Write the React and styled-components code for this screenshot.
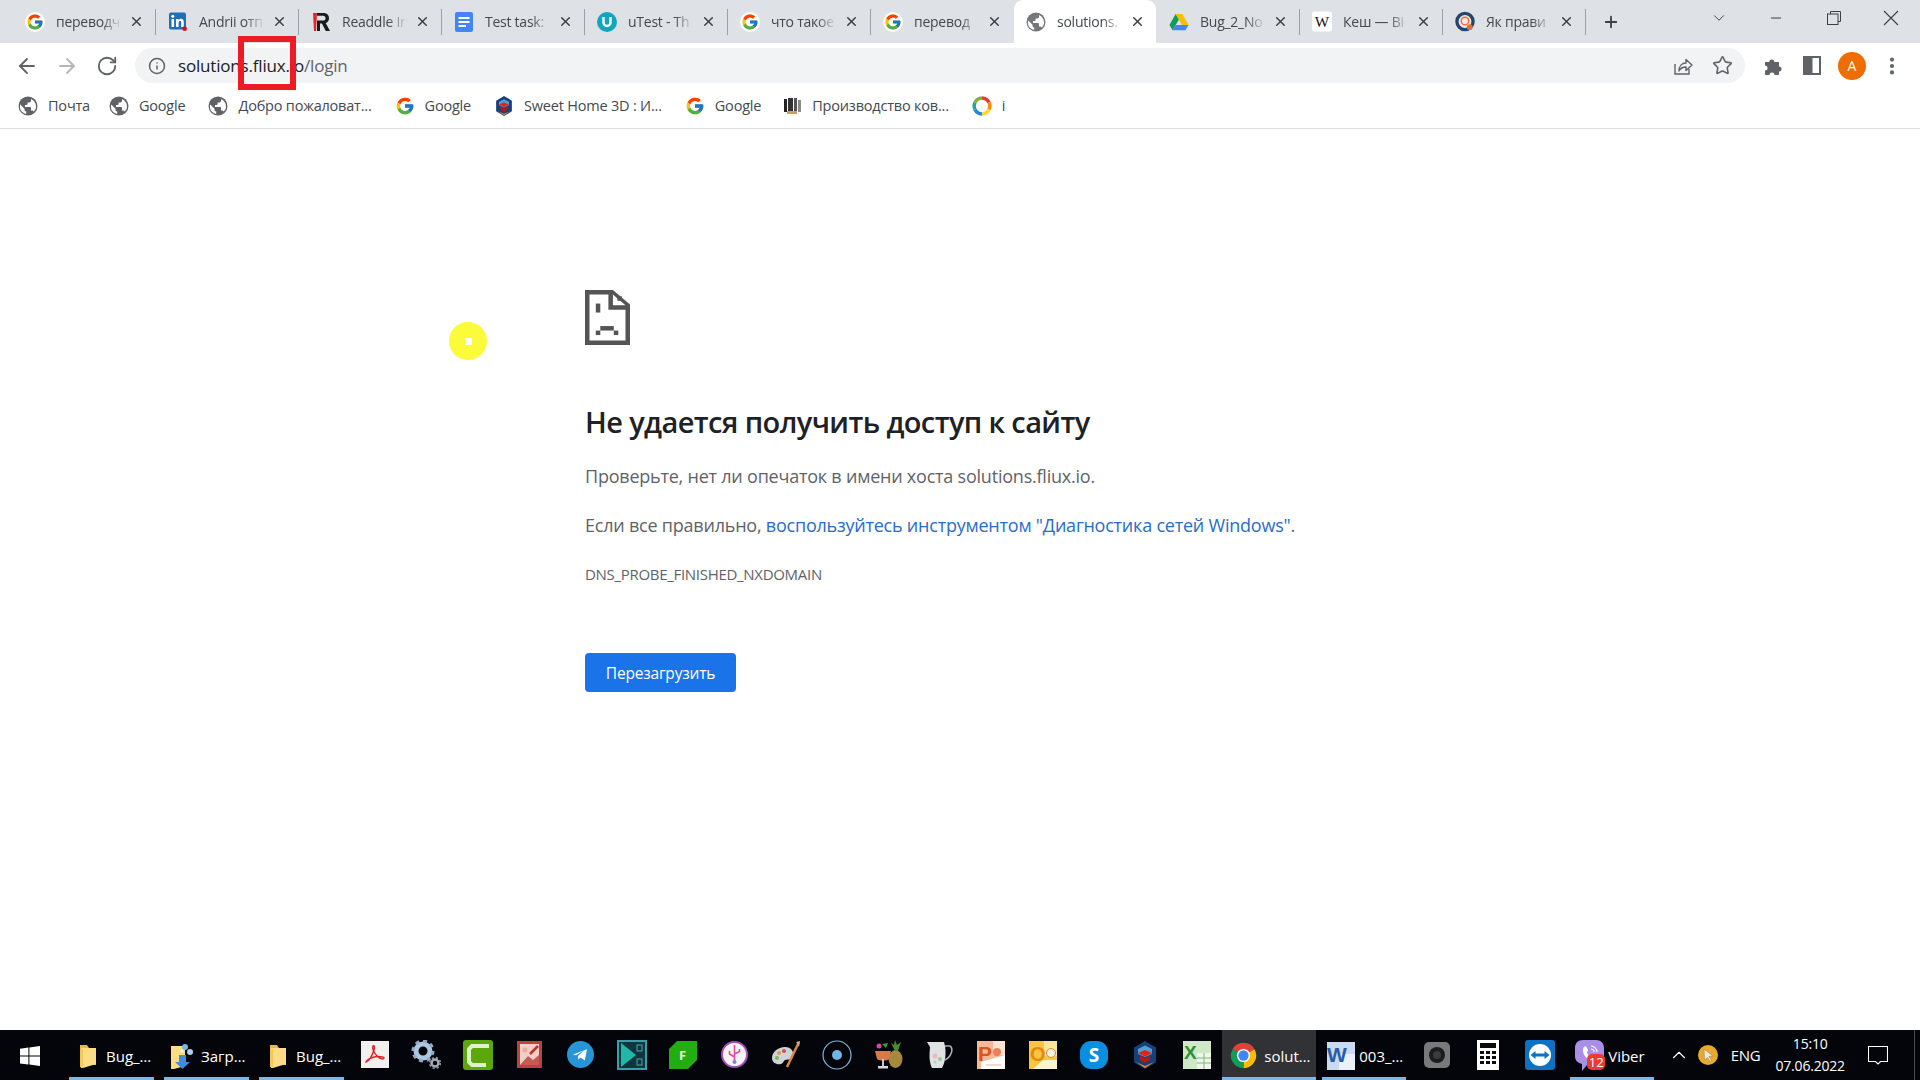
import React from 'react';
import styled, { createGlobalStyle } from 'styled-components';
import { ArrowLeft, ArrowRight, RotateCw, Info, Star, X, Plus, ChevronDown, ChevronUp, Minus, EllipsisVertical } from 'lucide-react';

const Global = createGlobalStyle`
  html, body { margin: 0; padding: 0; background: #fff; }
  body { font-family: "Open Sans", "Liberation Sans", sans-serif; overflow: hidden; }
`;

const Screen = styled.div`
  position: relative;
  width: 1920px;
  height: 1080px;
  display: flex;
  flex-direction: column;
  background: #fff;
  overflow: hidden;
`;

/* ---------- tabs ---------- */
const TabStrip = styled.div`
  height: 43px;
  flex: none;
  display: flex;
  align-items: flex-end;
  padding-left: 13px;
  background: #dee1e6;
`;

const Tab = styled.div`
  position: relative;
  width: 142px;
  height: 43px;
  flex: none;
  display: flex;
  align-items: center;
  box-sizing: border-box;
  padding: 0 0 0 12px;
  background: ${p => (p.$active ? '#fff' : 'transparent')};
  border-radius: 9px 9px 0 0;
`;

const TabDivider = styled.div`
  width: 1px;
  height: 26px;
  flex: none;
  align-self: center;
  background: ${p => (p.$hidden ? 'transparent' : '#9da1a7')};
`;

const FavSlot = styled.span`
  width: 20px;
  height: 20px;
  flex: none;
  display: flex;
  align-items: center;
  justify-content: center;
  border-radius: 50%;
  background: ${p => (p.$plate ? '#fff' : 'transparent')};
`;

const TabTitle = styled.span`
  width: 68px;
  margin-left: 11px;
  flex: none;
  overflow: hidden;
  white-space: nowrap;
  font-size: 14px;
  letter-spacing: -0.25px;
  color: #45494e;
  mask-image: linear-gradient(to right, #000 68%, transparent 96%);
`;

const TabClose = styled.span`
  width: 16px;
  height: 16px;
  margin-left: 4px;
  flex: none;
  display: flex;
  align-items: center;
  justify-content: center;
  color: #3c4043;
`;

const NewTab = styled.div`
  width: 18px;
  height: 18px;
  margin-left: 16px;
  align-self: center;
  color: #3c4043;
`;

const WindowControls = styled.div`
  margin-left: auto;
  display: flex;
  align-items: center;
  height: 36px;
  align-self: flex-start;
  color: #3c4043;
`;

const WindowButton = styled.span`
  width: 57.5px;
  flex: none;
  display: flex;
  align-items: center;
  justify-content: center;
`;

/* ---------- toolbar ---------- */
const Toolbar = styled.div`
  height: 45px;
  flex: none;
  display: flex;
  align-items: center;
  padding-left: 15px;
  box-sizing: border-box;
  color: #5f6368;
`;

const NavButton = styled.span`
  width: ${p => p.$w || 40}px;
  flex: none;
  display: flex;
  justify-content: flex-start;
  color: ${p => (p.$off ? '#b4b7bb' : '#5f6368')};
`;

const Omnibox = styled.div`
  width: 1610px;
  height: 35px;
  flex: none;
  display: flex;
  align-items: center;
  box-sizing: border-box;
  padding: 0 12px 0 13px;
  border-radius: 18px;
  background: #f1f3f4;
`;

const UrlText = styled.span`
  margin-left: 12px;
  font-size: 17px;
  letter-spacing: -0.18px;
  color: #202124;
`;

const UrlPath = styled.span`
  color: #5f6368;
`;

const OmniActions = styled.div`
  margin-left: auto;
  display: flex;
  align-items: center;
  gap: 19px;
  color: #5f6368;
`;

const ToolIcons = styled.div`
  display: flex;
  align-items: center;
  margin-left: 17px;
  color: #5f6368;
`;

const ToolSlot = styled.span`
  width: ${p => p.$w}px;
  flex: none;
  display: flex;
  align-items: center;
  justify-content: center;
`;

const Avatar = styled.span`
  width: 28px;
  height: 28px;
  flex: none;
  border-radius: 50%;
  display: flex;
  align-items: center;
  justify-content: center;
  background: #ee6c00;
  color: #fff;
  font-size: 14px;
`;

/* ---------- bookmarks ---------- */
const BookmarkBar = styled.div`
  height: 41px;
  flex: none;
  display: flex;
  align-items: center;
  gap: 23px;
  padding: 0 0 5px 18px;
  box-sizing: border-box;
  border-bottom: 1px solid #dadce0;
`;

const Bookmark = styled.div`
  display: flex;
  align-items: center;
  gap: 10px;
  font-size: 14.5px;
  letter-spacing: -0.2px;
  color: #45494e;
  white-space: nowrap;
  &:first-child {
    margin-right: -4px;
  }
`;

/* ---------- error page ---------- */
const Page = styled.main`
  position: relative;
  flex: 1;
  padding: 161px 0 0 585px;
  box-sizing: border-box;
`;

const Heading = styled.h1`
  margin: 52px 0 21px;
  font-size: 29px;
  line-height: 40px;
  font-weight: 600;
  color: #202124;
  letter-spacing: -0.61px;
`;

const Para = styled.p`
  margin: 0 0 23px;
  font-size: 18px;
  line-height: 26px;
  color: #5f6368;
  letter-spacing: -0.22px;
`;

const Link = styled.a`
  color: #2a6cc9;
`;

const ErrorCode = styled.div`
  margin-top: 26px;
  font-size: 15px;
  line-height: 20px;
  color: #5f6368;
  letter-spacing: -0.3px;
`;

const ReloadButton = styled.button`
  display: block;
  width: 151px;
  height: 39px;
  margin-top: 69px;
  padding: 0;
  border: 0;
  border-radius: 4px;
  background: #1a73e8;
  color: #fff;
  font-family: inherit;
  font-size: 15.5px;
  font-weight: 500;
  letter-spacing: -0.2px;
`;

const CursorMark = styled.div`
  position: absolute;
  left: 449px;
  top: 193px;
  width: 38px;
  height: 38px;
  border-radius: 50%;
  background: #fbfb3a;
  display: flex;
  align-items: center;
  justify-content: center;
  &::after {
    content: '';
    width: 7px;
    height: 7px;
    background: #fff;
  }
`;

const RedBox = styled.div`
  position: absolute;
  left: 238px;
  top: 36px;
  width: 58px;
  height: 54px;
  box-sizing: border-box;
  border: 6px solid #ed1c24;
`;

/* ---------- taskbar ---------- */
const Taskbar = styled.footer`
  height: 50px;
  flex: none;
  display: flex;
  background: #03050b;
  color: #fff;
  font-size: 15px;
`;

const StartButton = styled.div`
  width: 60px;
  margin-right: 9px;
  flex: none;
  display: flex;
  align-items: center;
  justify-content: center;
  padding-top: 1px;
`;

const RunningApp = styled.div`
  width: ${p => p.$w}px;
  margin: 0 ${p => p.$mr || 0}px 0 ${p => p.$ml || 0}px;
  flex: none;
  position: relative;
  display: flex;
  align-items: center;
  box-sizing: border-box;
  padding-top: 4px;
  border-bottom: 3px solid #76b9ed;
  background: ${p => (p.$active ? '#303236' : 'transparent')};
  white-space: nowrap;
`;

const RunIcon = styled.span`
  width: ${p => p.$slot}px;
  flex: none;
  display: flex;
  align-items: center;
  justify-content: center;
`;

const PinnedApp = styled.div`
  width: ${p => p.$w || 51.2}px;
  flex: none;
  display: flex;
  align-items: center;
  justify-content: center;
  margin-left: ${p => p.$ml || 0}px;
  padding-bottom: 1px;
`;

const Badge = styled.span`
  position: absolute;
  left: 17px;
  top: 24px;
  width: 18px;
  height: 16px;
  border-radius: 5px;
  background: #f03a30;
  font-size: 13px;
  line-height: 16px;
  text-align: center;
`;

const Tray = styled.div`
  display: flex;
  align-items: center;
  padding-left: 13.5px;
  gap: 8.5px;
`;

const TrayLabel = styled.span`
  width: 31px;
  margin: 0 5px 0 4px;
  font-size: 15px;
  letter-spacing: -0.3px;
`;

const Clock = styled.div`
  width: 70px;
  text-align: center;
  font-size: 14px;
  line-height: 22px;
  letter-spacing: -0.2px;
`;

const Notification = styled.span`
  margin: 0 17.5px 0 14.5px;
  display: flex;
`;

const DesktopEdge = styled.span`
  width: 1px;
  height: 50px;
  background: #4a4c50;
`;

/* ---------- drawings ---------- */
const GoogleG = ({ size = 18 }) => (
  <svg width={size} height={size} viewBox="0 0 48 48">
    <path fill="#FFC107" d="M43.6 20.5H42V20H24v8h11.3c-1.6 4.7-6.1 8-11.3 8-6.6 0-12-5.4-12-12s5.4-12 12-12c3.1 0 5.8 1.2 8 3l5.7-5.7C34 6.1 29.3 4 24 4 13 4 4 13 4 24s9 20 20 20 20-9 20-20c0-1.3-.1-2.4-.4-3.5z" />
    <path fill="#FF3D00" d="M6.3 14.7l6.6 4.8C14.7 15.1 19 12 24 12c3.1 0 5.8 1.2 8 3l5.7-5.7C34 6.1 29.3 4 24 4 16.3 4 9.7 8.3 6.3 14.7z" />
    <path fill="#4CAF50" d="M24 44c5.2 0 9.9-2 13.4-5.2l-6.2-5.2C29.2 35.1 26.7 36 24 36c-5.2 0-9.6-3.3-11.3-7.9l-6.5 5C9.5 39.6 16.2 44 24 44z" />
    <path fill="#1976D2" d="M43.6 20.5H42V20H24v8h11.3c-.8 2.2-2.2 4.2-4.1 5.6l6.2 5.2C37 39.2 44 34 44 24c0-1.3-.1-2.4-.4-3.5z" />
  </svg>
);

const Globe = ({ size = 20, color = '#5f6368' }) => (
  <svg width={size} height={size} viewBox="0 0 20 20">
    <circle cx="10" cy="10" r="9.5" fill={color} />
    <path fill="#fff" d="M2.2 8.5l4.3 4.3v1c0 1 .8 1.7 1.7 1.7v2.4C4.7 17.4 1.9 14.3 1.9 10.5c0-.7.1-1.3.3-2zM15.5 15.6c-.2-.7-.9-1.2-1.6-1.2H13v-2.6c0-.5-.4-.9-.9-.9H7V9h1.7c.5 0 .9-.4.9-.9V6.4h1.7c1 0 1.7-.8 1.7-1.7V3.1c3 1.2 5 4.1 5 7.4 0 2-.7 3.8-2.5 5.1z" />
  </svg>
);

const LinkedIn = () => (
  <svg width="21" height="21" viewBox="0 0 20 20">
    <rect x="1" y="1" width="17" height="17" rx="2" fill="#1f6fb5" />
    <rect x="3.500" y="7.500" width="2.600" height="8" fill="#fff" />
    <circle cx="4.800" cy="4.800" r="1.500" fill="#fff" />
    <path fill="#fff" d="M8 7.500h2.500v1.200c.5-.8 1.400-1.400 2.500-1.400 2 0 2.800 1.300 2.800 3.400v4.800h-2.600v-4.200c0-1-.3-1.700-1.200-1.700s-1.400.7-1.400 1.700v4.200H8z" />
    <circle cx="16.600" cy="17.200" r="2.400" fill="#d3132b" />
  </svg>
);

const ReaddleMark = () => (
  <svg width="20" height="20" viewBox="0 0 20 20">
    <path fill="#e3242b" d="M2 1h4l-1 18H3z" />
    <path fill="#1a1a1a" d="M6 1h6.500C16 1 18 3.200 18 6.200c0 2.500-1.300 4.200-3.300 4.900L19 19h-4.200l-3.900-7.400H9V19H6V8.600h6c1.600 0 2.600-1 2.600-2.400S13.600 3.800 12 3.800H6z" />
  </svg>
);

const DocsMark = () => (
  <svg width="20" height="20" viewBox="0 0 20 20">
    <rect x="1" y="0" width="18" height="20" rx="2" fill="#4285f4" />
    <rect x="4.500" y="5" width="11" height="2" fill="#fff" />
    <rect x="4.500" y="9" width="11" height="2" fill="#fff" />
    <rect x="4.500" y="13" width="7.500" height="2" fill="#fff" />
  </svg>
);

const UtestMark = () => (
  <svg width="20" height="20" viewBox="0 0 20 20">
    <circle cx="10" cy="10" r="10" fill="#12a5bf" />
    <path d="M6.500 5v5.500a3.500 3.500 0 0 0 7 0V5" fill="none" stroke="#fff" strokeWidth="2.400" />
  </svg>
);

const DriveMark = () => (
  <svg width="20" height="20" viewBox="0 0 24 24">
    <path fill="#0f9d58" d="M8 2.500L.5 15.500l3.800 6.500L12 9z" />
    <path fill="#fbbc04" d="M8 2.500h8l7.500 13h-7.800z" />
    <path fill="#4285f4" d="M4.300 22h15.400l3.800-6.500H8z" />
  </svg>
);

const WikiMark = () => (
  <svg width="21" height="21" viewBox="0 0 21 21" fontFamily="Liberation Serif, serif">
    <rect width="21" height="21" rx="3" fill="#fff" />
    <text x="10.500" y="16" textAnchor="middle" fontSize="16" fill="#111">W</text>
  </svg>
);

const QuoraRing = () => (
  <svg width="21" height="21" viewBox="0 0 21 21">
    <circle cx="10.500" cy="10.500" r="8.500" fill="#fbe7dd" stroke="#25456f" strokeWidth="3.500" />
    <circle cx="10.500" cy="10" r="4" fill="none" stroke="#e2704a" strokeWidth="1.500" />
    <circle cx="15.500" cy="16.500" r="3" fill="#ee6a2c" />
  </svg>
);

const SweetHome = ({ size = 20 }) => (
  <svg width={size} height={size} viewBox="0 0 24 28">
    <path fill="#173f7c" d="M12 0l11 6.500v15L12 28 1 21.500v-15z" />
    <path fill="#4da0d0" d="M5 8l7-3.500L19 8v5l-7 3-7-3z" />
    <path fill="#e2231a" d="M5 12l7-3 7 3-7 3.500z" />
    <path fill="#b41a14" d="M7 14.500l5 2.500 5-2.500V19l-5 3-5-3z" />
    <path fill="#f08a24" d="M3 21l9 6 9-6-9 4z" />
  </svg>
);

const CarpetMark = () => (
  <svg width="18" height="18" viewBox="0 0 18 18">
    <rect x="0" y="2" width="3" height="13" fill="#222" />
    <rect x="4" y="1" width="5" height="14" fill="#333" />
    <rect x="10" y="1" width="3" height="14" fill="#555" />
    <rect x="14" y="3" width="3" height="12" fill="#8a8a8a" />
    <rect x="3" y="14" width="10" height="3" fill="#c9a06a" />
  </svg>
);

const RingMark = () => (
  <svg width="20" height="20" viewBox="0 0 20 20" fill="none" strokeWidth="3.500">
    <path d="M3 6.500A8 8 0 0 1 10 2" stroke="#7cb342" />
    <path d="M10 2a8 8 0 0 1 7 4.500" stroke="#e53935" />
    <path d="M17 6.500a8 8 0 0 1 0 7" stroke="#fb8c00" />
    <path d="M17 13.500A8 8 0 0 1 10 18" stroke="#fdd835" />
    <path d="M10 18a8 8 0 0 1-7-4.500" stroke="#1e88e5" />
    <path d="M3 13.500a8 8 0 0 1 0-7" stroke="#26a69a" />
  </svg>
);

const SadPage = () => (
  <svg width="45" height="55" viewBox="0 0 100 122" fill="#555">
    <path fillRule="evenodd" d="M0 0h62l38 32v90H0zM10 10v102h80V44H52V10zM62 10v24h28z" />
    <rect x="72" y="14" width="10" height="10" />
    <rect x="24" y="30" width="10" height="20" />
    <rect x="34" y="80" width="30" height="10" />
    <rect x="24" y="90" width="10" height="10" />
    <rect x="64" y="90" width="10" height="10" />
  </svg>
);

const ShareIcon = () => (
  <svg width="20" height="20" viewBox="0 0 20 20" fill="none" stroke="#5f6368" strokeWidth="1.400">
    <path d="M2 8v10h14v-5" />
    <path d="M6 15c0-5 3-8 7-8V3.500L19 9l-6 5.500V11c-3 0-5.500 1-7 4z" strokeLinejoin="round" />
  </svg>
);

const PuzzleIcon = () => (
  <svg width="20" height="20" viewBox="0 0 20 20" fill="#5f6368">
    <path d="M2 6h4.300a2.500 2.500 0 1 1 5 0H16v4.500a2.500 2.500 0 1 1 0 5V19H11.500a2.500 2.500 0 1 0-5 0H2v-4.500a2.500 2.500 0 1 0 0-5z" />
  </svg>
);

const SidePanelIcon = () => (
  <svg width="18" height="19" viewBox="0 0 18 19">
    <rect width="18" height="19" fill="#5f6368" />
    <rect x="9.500" y="2" width="6.500" height="15" fill="#fff" />
  </svg>
);

const RestoreIcon = () => (
  <svg width="14" height="14" viewBox="0 0 14 14" fill="none" stroke="#3c4043">
    <path d="M3.500 3V.5h10v10H11" />
    <rect x=".5" y="3" width="10.500" height="10.500" />
  </svg>
);

const ThinX = () => (
  <svg width="16" height="16" viewBox="0 0 16 16" stroke="#3c4043" strokeWidth="1.100">
    <path d="M1 1l14 14M15 1L1 15" />
  </svg>
);

const WinLogo = () => (
  <svg width="20" height="20" viewBox="0 0 20 20" fill="#fff">
    <path d="M0 2.800l8.400-1.200v8H0zM9.400 1.400L20 0v9.600H9.400zM0 10.600h8.400v8L0 17.400zM9.400 10.600H20V20l-10.600-1.400z" />
  </svg>
);

const Folder = () => (
  <svg width="18" height="26" viewBox="0 0 18 26">
    <path fill="#e7b949" d="M1 2h7l2 3h7v17H1z" />
    <path fill="#fcdc85" d="M2 5h15v16l-13 4H2z" />
    <path fill="#f6c85c" d="M1 7l3-1v19l-3-1z" />
  </svg>
);

const DownloadsFolder = () => (
  <svg width="26" height="28" viewBox="0 0 26 28">
    <path fill="#fcdc85" d="M1 4h14v20l-11 3H1z" />
    <path fill="#3d8ee0" d="M9 13h7v7h4l-7.500 7L5 20h4z" />
    <circle cx="15" cy="5" r="3" fill="#7ab6ea" />
    <circle cx="20" cy="10" r="3" fill="#a8d2f2" />
    <circle cx="12" cy="9" r="1.500" fill="#fff" />
  </svg>
);

const AcrobatIcon = () => (
  <svg width="28" height="27" viewBox="0 0 28 27">
    <rect width="28" height="27" fill="#f2f0ee" />
    <path d="M5 21c3-1 6-6 8-12 1-3 0-5-1-4s0 6 4 10 7 3 7 2-5-2-10-1-8 4-8 5z" fill="none" stroke="#d9262b" strokeWidth="1.500" />
  </svg>
);

const GearsIcon = () => (
  <svg width="30" height="30" viewBox="0 0 30 30" fill="none">
    <circle cx="12" cy="11" r="7" stroke="#aec6e0" strokeWidth="5" />
    <circle cx="12" cy="11" r="10" stroke="#8fa9c6" strokeWidth="3" strokeDasharray="4 3.800" />
    <circle cx="24" cy="23" r="3.500" stroke="#a3adb7" strokeWidth="2.500" />
    <circle cx="24" cy="23" r="5.300" stroke="#8a949e" strokeWidth="1.800" strokeDasharray="2.200 2" />
  </svg>
);

const CamtasiaIcon = () => (
  <svg width="30" height="30" viewBox="0 0 30 30">
    <rect width="30" height="30" rx="3" fill="#5ca80a" />
    <path d="M26 6H9L6 9v13l3 3h14" fill="none" stroke="#dff3c9" strokeWidth="4" />
  </svg>
);

const RedPicIcon = () => (
  <svg width="25" height="27" viewBox="0 0 25 27">
    <rect width="25" height="27" fill="#b8433f" />
    <rect x="3" y="3" width="19" height="21" fill="#eecfc9" />
    <path d="M3 24l8-9 5 4 6-5v10z" fill="#c65a54" />
    <path d="M13 13l8-8" stroke="#c0332d" strokeWidth="2.500" />
    <circle cx="8" cy="9" r="2.500" fill="#f5a89c" />
  </svg>
);

const TelegramIcon = () => (
  <svg width="27" height="27" viewBox="0 0 27 27">
    <circle cx="13.500" cy="13.500" r="13.500" fill="#2694d6" />
    <path fill="#fff" d="M6 13.500l14-5.300-2.200 11.200-4.300-3-2.200 2-.4-3.500 6-5.500-8 4.800z" />
  </svg>
);

const VideoIcon = () => (
  <svg width="30" height="30" viewBox="0 0 30 30">
    <rect x="1" y="1" width="28" height="28" fill="#0d3640" stroke="#39a0a8" strokeWidth="2" />
    <path fill="#22b8a8" d="M4 3l15 12L4 27z" />
    <rect x="20" y="5" width="5" height="6" fill="none" stroke="#5f9ca0" />
    <rect x="20" y="19" width="5" height="6" fill="none" stroke="#5f9ca0" />
  </svg>
);

const FeedlyIcon = () => (
  <svg width="28" height="28" viewBox="0 0 28 28" fontFamily="Open Sans, sans-serif">
    <path fill="#23ad12" d="M8 0h20v19l-9 9H0V8z" />
    <text x="13.500" y="19" textAnchor="middle" fontSize="13" fontWeight="700" fill="#e4f7de">F</text>
  </svg>
);

const UsbIcon = () => (
  <svg width="27" height="27" viewBox="0 0 27 27">
    <circle cx="13.500" cy="13.500" r="12.500" fill="#f7f2f6" stroke="#a24fc0" strokeWidth="2" />
    <path d="M13.500 4v18M13.500 16l-5-3v-3M13.500 13l5-2.500V8" fill="none" stroke="#dd4f9b" strokeWidth="1.600" />
    <circle cx="13.500" cy="21" r="2" fill="#6e8fd6" />
  </svg>
);

const PaletteIcon = () => (
  <svg width="30" height="30" viewBox="0 0 30 30">
    <path fill="#cfd2d6" d="M14 7C7 7 1 12 1 18c0 5 5 7 9 6 3-1 2-3 4-4 3-1 7 0 8-3 2-5-2-10-8-10z" />
    <circle cx="8" cy="13" r="2" fill="#d8a24c" />
    <circle cx="13" cy="11" r="2" fill="#d24f4f" />
    <circle cx="6" cy="18" r="2" fill="#6fbf5f" />
    <path d="M28 2L16 27" stroke="#d98a3a" strokeWidth="2.500" />
    <path d="M25 2l4-1-1 6z" fill="#c9a98a" />
  </svg>
);

const RingDotIcon = () => (
  <svg width="30" height="30" viewBox="0 0 30 30">
    <circle cx="15" cy="15" r="14" fill="none" stroke="#7fb8d8" strokeWidth="1.200" />
    <circle cx="15" cy="15" r="5" fill="#72b4e4" />
  </svg>
);

const CocktailIcon = () => (
  <svg width="30" height="30" viewBox="0 0 30 30">
    <ellipse cx="21.500" cy="19" rx="7" ry="9" fill="#a6893a" />
    <path d="M21 11l-4-8 3 2 1-5 2 5 4-3-3 9z" fill="#4f8a2c" />
    <path d="M1 11h16l-2 8c-1 2-10 2-12 0z" fill="#d67a4a" />
    <rect x="8" y="19" width="2" height="7" fill="#c9c9c9" />
    <rect x="4" y="26" width="10" height="2.500" fill="#d9d9d9" />
    <circle cx="5" cy="6" r="2.500" fill="#d846a0" />
    <path d="M8 4l6-1-2 5z" fill="#3f9a3f" />
  </svg>
);

const JugIcon = () => (
  <svg width="28" height="28" viewBox="0 0 28 28">
    <path d="M1 1h17l1 4c1 6 1 15-3 22H6C2 19 4 9 4 6z" fill="#dfe2e1" />
    <path d="M19 5h5c4 3 1 11-5 14" fill="none" stroke="#a9acab" strokeWidth="1.600" />
    <circle cx="9" cy="15" r="2.500" fill="#e8b7c4" />
    <circle cx="14" cy="18" r="2" fill="#9fc89a" />
    <circle cx="9" cy="21" r="1.500" fill="#b5d2ae" />
  </svg>
);

const PptIcon = () => (
  <svg width="28" height="28" viewBox="0 0 28 28" fontFamily="Liberation Sans, sans-serif">
    <path fill="#f7b995" d="M0 0h28v28H0z" />
    <path fill="#fbe4d5" d="M16 0h12v14H16z" />
    <text x="1" y="20" fontSize="21" fontWeight="700" fill="#d9541e">P</text>
    <path fill="#fff" d="M4 21l24-7v14H4z" />
    <circle cx="20" cy="11" r="4" fill="#e8825a" />
    <path stroke="#eab39a" d="M9 24h15" />
  </svg>
);

const OutlookIcon = () => (
  <svg width="28" height="28" viewBox="0 0 28 28" fontFamily="Liberation Sans, sans-serif">
    <rect width="28" height="28" fill="#f9c542" />
    <rect x="15" y="0" width="13" height="15" fill="#fbe39c" />
    <text x="1" y="20" fontSize="20" fontWeight="700" fill="#e8890c">O</text>
    <path fill="#fff4d0" d="M4 28l10-9h14v9z" />
    <circle cx="22" cy="12" r="4.500" fill="#f3f0e6" stroke="#d98a2a" />
  </svg>
);

const SkypeIcon = () => (
  <svg width="28" height="28" viewBox="0 0 28 28" fontFamily="Open Sans, sans-serif">
    <rect width="28" height="28" rx="11" fill="#0a8fe0" />
    <text x="14" y="21" textAnchor="middle" fontSize="19" fontWeight="700" fill="#fff">S</text>
  </svg>
);

const ExcelIcon = () => (
  <svg width="28" height="28" viewBox="0 0 28 28" fontFamily="Liberation Sans, sans-serif">
    <rect width="28" height="28" fill="#cfe8c8" />
    <path fill="#eef7ea" d="M14 12h14v16H14z" />
    <path stroke="#7fb77a" d="M14 17h14M14 22h14M21 12v16" />
    <text x="1" y="18" fontSize="19" fontWeight="700" fill="#2c8f3c">X</text>
  </svg>
);

const ChromeIcon = () => (
  <svg width="27" height="27" viewBox="0 0 32 32">
    <path fill="#db4437" d="M16 16L3 8.500A15 15 0 0 1 29 8.500z" />
    <path fill="#fbbc05" d="M16 16L29 8.500A15 15 0 0 1 16 31z" />
    <path fill="#0f9d58" d="M16 16L16 31A15 15 0 0 1 3 8.500z" />
    <circle cx="16" cy="16" r="7.800" fill="#fff" />
    <circle cx="16" cy="16" r="6.100" fill="#4285f4" />
  </svg>
);

const WordIcon = () => (
  <svg width="28" height="28" viewBox="0 0 28 28" fontFamily="Liberation Sans, sans-serif">
    <rect width="28" height="28" fill="#c9daf2" />
    <path fill="#eaf1fb" d="M12 12h16v16H12z" />
    <text x="0" y="20" fontSize="21" fontWeight="700" fill="#2a5caa">W</text>
  </svg>
);

const CameraIcon = () => (
  <svg width="26" height="26" viewBox="0 0 26 26">
    <rect width="26" height="26" rx="5" fill="#77797b" />
    <circle cx="13" cy="13" r="8" fill="#1b1c1e" />
    <circle cx="13" cy="13" r="4" fill="#3a3b3e" />
  </svg>
);

const CalcIcon = () => (
  <svg width="22" height="30" viewBox="0 0 22 30">
    <rect width="22" height="30" fill="#fff" />
    <rect x="3" y="3" width="16" height="5" fill="#0b0b0b" />
    {[11, 16, 21].map(y =>
      [3, 9, 15].map(x => <rect key={`${x}-${y}`} x={x} y={y} width="4" height="3" fill="#0b0b0b" />)
    )}
  </svg>
);

const TeamViewerIcon = () => (
  <svg width="30" height="30" viewBox="0 0 30 30">
    <rect width="30" height="30" rx="3" fill="#0e72c4" />
    <circle cx="15" cy="15" r="11" fill="#fff" />
    <path fill="#0e72c4" d="M5.500 15l5-4v2.500h9V11l5 4-5 4v-2.500h-9V19z" />
  </svg>
);

const ViberIcon = () => (
  <svg width="29" height="31" viewBox="0 0 29 31">
    <path fill="#a98fe8" d="M8 0h13c5 0 8 3 8 8v9c0 5-3 8-8 8h-9l-5 6v-7c-4-1-7-3-7-8V8c0-5 3-8 8-8z" />
    <path fill="#fff" d="M9 7c2-2 3 1 4 3 0 2-2 2-1 3 1 2 2 3 4 4 1 1 1-1 3-1 2 1 4 2 3 4-2 3-5 2-8 0-4-3-6-6-6-9 0-2 0-3 1-4z" />
    <path d="M16 6c3 0 6 3 6 6M16 9c2 0 3 1 3 3" fill="none" stroke="#fff" strokeWidth="1.200" />
  </svg>
);

const CursorCoin = () => (
  <svg width="20" height="20" viewBox="0 0 20 20">
    <circle cx="10" cy="10" r="10" fill="#eaa92c" />
    <path fill="#f3ead0" stroke="#9a8a60" strokeWidth=".6" d="M6 4l9 7-4 .5 2.500 4-1.500 1-2.500-4L6.500 15z" />
  </svg>
);

const NotifyIcon = () => (
  <svg width="20" height="19" viewBox="0 0 20 19" fill="none" stroke="#fff" strokeWidth="1.100">
    <path d="M.5.500h19v15h-7l-2.500 2.500L7.500 15.500h-7z" />
  </svg>
);

const tabs = [
  { title: 'переводч', icon: <GoogleG />, plate: true },
  { title: 'Andrii отп', icon: <LinkedIn /> },
  { title: 'Readdle Ir', icon: <ReaddleMark /> },
  { title: 'Test task:', icon: <DocsMark /> },
  { title: 'uTest - Th', icon: <UtestMark /> },
  { title: 'что такое', icon: <GoogleG />, plate: true },
  { title: 'перевод', icon: <GoogleG />, plate: true },
  { title: 'solutions.', icon: <Globe color="#74787d" />, active: true },
  { title: 'Bug_2_No', icon: <DriveMark /> },
  { title: 'Кеш — Ві', icon: <WikiMark /> },
  { title: 'Як прави', icon: <QuoraRing /> },
];

const bookmarks = [
  { label: 'Почта', icon: <Globe /> },
  { label: 'Google', icon: <Globe /> },
  { label: 'Добро пожаловат...', icon: <Globe /> },
  { label: 'Google', icon: <GoogleG size={20} /> },
  { label: 'Sweet Home 3D : И...', icon: <SweetHome /> },
  { label: 'Google', icon: <GoogleG size={20} /> },
  { label: 'Производство ков...', icon: <CarpetMark /> },
  { label: 'i', icon: <RingMark /> },
];

const pinnedFirst = [
  <AcrobatIcon />, <GearsIcon />, <CamtasiaIcon />, <RedPicIcon />, <TelegramIcon />, <VideoIcon />,
  <FeedlyIcon />, <UsbIcon />, <PaletteIcon />, <RingDotIcon />, <CocktailIcon />, <JugIcon />,
  <PptIcon />, <OutlookIcon />, <SkypeIcon />, <SweetHome size={28} />, <ExcelIcon />,
];

const App = () => {
  return (
    <Screen>
      <Global />
      <TabStrip>
        {tabs.map((tab, i) => (
          <React.Fragment key={i}>
            <Tab $active={tab.active}>
              <FavSlot $plate={tab.plate}>{tab.icon}</FavSlot>
              <TabTitle>{tab.title}</TabTitle>
              <TabClose><X size={15} strokeWidth={2.4} /></TabClose>
            </Tab>
            <TabDivider $hidden={tab.active || (tabs[i + 1] && tabs[i + 1].active) || i === 7} />
          </React.Fragment>
        ))}
        <NewTab><Plus size={18} strokeWidth={2.4} /></NewTab>
        <WindowControls>
          <WindowButton><ChevronDown size={18} strokeWidth={1.3} /></WindowButton>
          <WindowButton><Minus size={16} strokeWidth={1.5} /></WindowButton>
          <WindowButton><RestoreIcon /></WindowButton>
          <WindowButton><ThinX /></WindowButton>
        </WindowControls>
      </TabStrip>

      <Toolbar>
        <NavButton><ArrowLeft size={24} strokeWidth={1.8} /></NavButton>
        <NavButton $off $w={41}><ArrowRight size={24} strokeWidth={1.8} /></NavButton>
        <NavButton $w={39}><RotateCw size={22} strokeWidth={2} /></NavButton>
        <Omnibox>
          <Info size={18} strokeWidth={2} color="#5f6368" />
          <UrlText>solutions.fliux.io<UrlPath>/login</UrlPath></UrlText>
          <OmniActions>
            <ShareIcon />
            <Star size={21} strokeWidth={1.8} />
          </OmniActions>
        </Omnibox>
        <ToolIcons>
          <ToolSlot $w={22}><PuzzleIcon /></ToolSlot>
          <ToolSlot $w={56}><SidePanelIcon /></ToolSlot>
          <ToolSlot $w={24}><Avatar>A</Avatar></ToolSlot>
          <ToolSlot $w={56}><EllipsisVertical size={22} strokeWidth={2.6} /></ToolSlot>
        </ToolIcons>
      </Toolbar>

      <BookmarkBar>
        {bookmarks.map((b, i) => (
          <Bookmark key={i}>
            {b.icon}
            <span>{b.label}</span>
          </Bookmark>
        ))}
      </BookmarkBar>

      <Page>
        <CursorMark />
        <SadPage />
        <Heading>Не удается получить доступ к сайту</Heading>
        <Para>Проверьте, нет ли опечаток в имени хоста solutions.fliux.io.</Para>
        <Para>Если все правильно, <Link>воспользуйтесь инструментом "Диагностика сетей Windows"</Link>.</Para>
        <ErrorCode>DNS_PROBE_FINISHED_NXDOMAIN</ErrorCode>
        <ReloadButton>Перезагрузить</ReloadButton>
      </Page>

      <Taskbar>
        <StartButton><WinLogo /></StartButton>
        <RunningApp $w={85} $mr={10}><RunIcon $slot={37}><Folder /></RunIcon>Bug_…</RunningApp>
        <RunningApp $w={85} $mr={10}><RunIcon $slot={37}><DownloadsFolder /></RunIcon>Загр…</RunningApp>
        <RunningApp $w={85}><RunIcon $slot={37}><Folder /></RunIcon>Bug_…</RunningApp>
        {pinnedFirst.map((icon, i) => (
          <PinnedApp key={i} $w={51.35} $ml={i === 0 ? 5.4 : 0}>{icon}</PinnedApp>
        ))}
        <RunningApp $w={94} $active><RunIcon $slot={42}><ChromeIcon /></RunIcon>solut…</RunningApp>
        <RunningApp $w={84} $ml={6}><RunIcon $slot={37}><WordIcon /></RunIcon>003_…</RunningApp>
        <PinnedApp $ml={5.4}><CameraIcon /></PinnedApp>
        <PinnedApp><CalcIcon /></PinnedApp>
        <PinnedApp><TeamViewerIcon /></PinnedApp>
        <RunningApp $w={84} $ml={5}>
          <RunIcon $slot={38}><ViberIcon /></RunIcon>Viber
          <Badge>12</Badge>
        </RunningApp>
        <Tray>
          <ChevronUp size={22} strokeWidth={1.2} />
          <CursorCoin />
          <TrayLabel>ENG</TrayLabel>
          <Clock>15:10<br />07.06.2022</Clock>
          <Notification><NotifyIcon /></Notification>
          <DesktopEdge />
        </Tray>
      </Taskbar>

      <RedBox />
    </Screen>
  );
};

export default App;
